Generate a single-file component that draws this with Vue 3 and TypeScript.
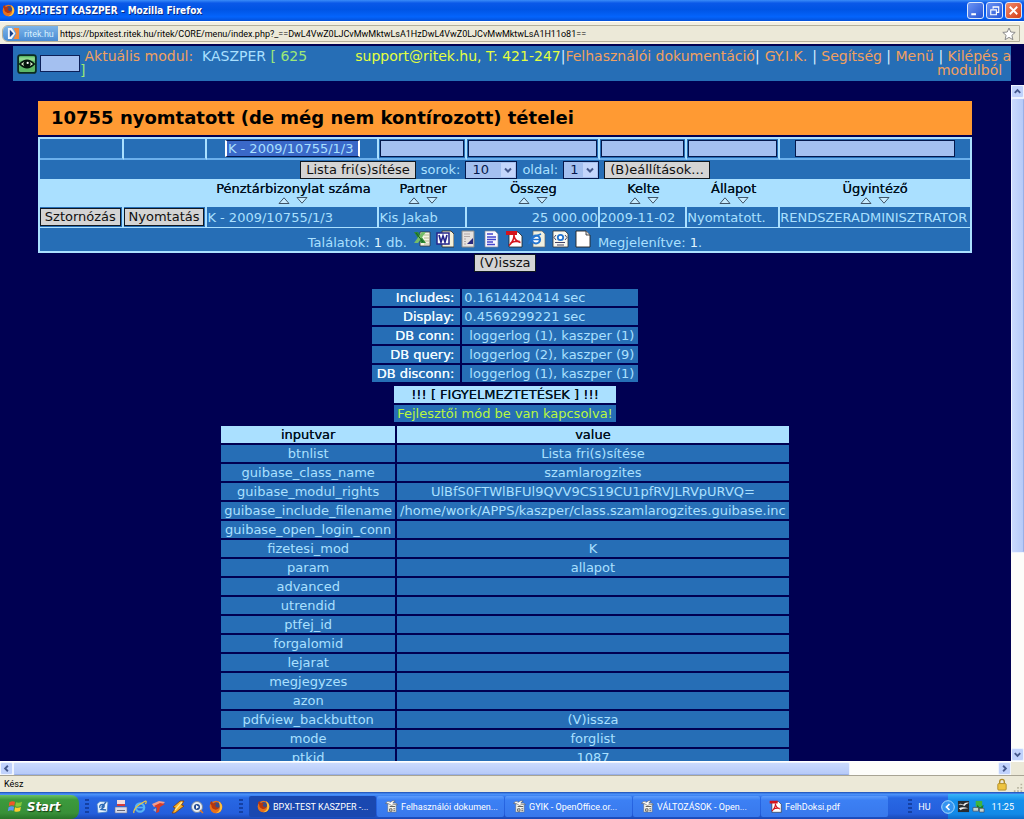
<script setup lang="ts">
import { ref, onMounted } from 'vue'

interface Column {
  label: string
  filterWidth: string
  value: string
  align: 'left' | 'right'
}

const columns: Column[] = [
  { label: 'Pénztárbizonylat száma', filterWidth: 'mid', value: 'K - 2009/10755/1/3', align: 'left' },
  { label: 'Partner', filterWidth: 'full', value: 'Kis Jakab', align: 'left' },
  { label: 'Összeg', filterWidth: 'full', value: '25 000.00', align: 'right' },
  { label: 'Kelte', filterWidth: 'full', value: '2009-11-02', align: 'left' },
  { label: 'Állapot', filterWidth: 'full', value: 'Nyomtatott.', align: 'left' },
  { label: 'Ügyintéző', filterWidth: 'wide', value: 'RENDSZERADMINISZTRATOR', align: 'left' },
]
const filters = ref<string[]>(['K - 2009/10755/1/3', '', '', '', '', ''])
const moduleCode = ref('')
const rows = ref('10')
const pageNo = ref('1')

const stats = [
  { label: 'Includes:', value: '0.1614420414 sec', list: false },
  { label: 'Display:', value: '0.4569299221 sec', list: false },
  { label: 'DB conn:', value: 'loggerlog (1), kaszper (1)', list: true },
  { label: 'DB query:', value: 'loggerlog (2), kaszper (9)', list: true },
  { label: 'DB disconn:', value: 'loggerlog (1), kaszper (1)', list: true },
]

const inputVars: [string, string][] = [
  ['btnlist', 'Lista fri(s)sítése'],
  ['guibase_class_name', 'szamlarogzites'],
  ['guibase_modul_rights', 'UlBfS0FTWlBFUl9QVV9CS19CU1pfRVJLRVpURVQ='],
  ['guibase_include_filename', '/home/work/APPS/kaszper/class.szamlarogzites.guibase.inc'],
  ['guibase_open_login_conn', ''],
  ['fizetesi_mod', 'K'],
  ['param', 'allapot'],
  ['advanced', ''],
  ['utrendid', ''],
  ['ptfej_id', ''],
  ['forgalomid', ''],
  ['lejarat', ''],
  ['megjegyzes', ''],
  ['azon', ''],
  ['pdfview_backbutton', '(V)issza'],
  ['mode', 'forglist'],
  ['ptkid', '1087'],
]

const exportsList = ['Excel', 'Word', 'Sablon', 'Szöveg', 'PDF', 'HTML', 'XML', 'Üres']
const tasks = [
  { icon: 'fox', text: 'BPXI-TEST KASZPER -...' },
  { icon: 'doc', text: 'Felhasználói dokumen...' },
  { icon: 'doc', text: 'GYIK - OpenOffice.or...' },
  { icon: 'doc', text: 'VÁLTOZÁSOK - Open...' },
  { icon: 'pdf', text: 'FelhDoksi.pdf' },
]
const quick = ['Asztal', 'Mentés', 'Internet Explorer', 'Levelezés', 'Winamp', 'Lejátszó', 'Firefox']

const root = ref<HTMLElement | null>(null)
onMounted(() => {
  root.value?.querySelector<HTMLInputElement>('.filter-mid')?.select()
})
</script>

<template>
  <div ref="root" class="screen">
    <svg class="defs" aria-hidden="true">
      <symbol id="fox" viewBox="0 0 14 14">
        <circle cx="7" cy="7" r="6.3" fill="#e8701a" />
        <circle cx="7.4" cy="5.6" r="3.4" fill="#3a4c88" />
        <path d="M1 3 L2.5 1 L4 3.2 L7.5 3.6 L6 5.6 L7.5 7.6 L10 7.2 Q9 10 6 9.6 Q2.5 9 2.4 5.5Z" fill="#b8360c" />
        <path d="M9.5 1.2 Q14 4 13 8.6 Q11.5 13.4 6.6 13.2 Q10.8 11.6 11 7.6 Q11 4 9.5 1.2Z" fill="#ffc23a" />
      </symbol>
      <symbol id="doc" viewBox="0 0 14 14">
        <path d="M3 4h9v9H3z" fill="#f6f6ee" stroke="#666" stroke-width=".5" />
        <path d="M.5 3.6Q3 0 6 2.400Q8 0 11 1.200Q9 2 8.400 3.400Q12 2.600 13.500 5Q9 4.200 7 5.800Q4 3.400 .5 3.600Z" fill="#fff" stroke="#555" stroke-width=".6" />
        <path d="M5 7h6M5 9.5h2.5v2.5H5zM9 9.5h2M9 11.5h2" stroke="#444" stroke-width=".9" fill="none" />
      </symbol>
      <symbol id="pdf" viewBox="0 0 18 18">
        <path d="M4 2h9l4 4v11H4z" fill="#fff" stroke="#222" stroke-width=".8" />
        <path d="M1 1h11v4H1z" fill="#d4141c" />
        <path d="M9 5Q9 11 4 15.5M9 6Q10 11 15.5 12.5M5.5 13Q9 10.8 14.5 11.4" stroke="#d4141c" stroke-width="1.6" fill="none" />
      </symbol>
    </svg>

    <header class="titlebar">
      <svg class="i13"><use href="#fox" /></svg>
      <h1 class="window-title">BPXI-TEST KASZPER - Mozilla Firefox</h1>
      <button class="win-btn" type="button" aria-label="Kis méret">
        <svg viewBox="0 0 16 16"><path d="M3.5 12h5" stroke="#fff" stroke-width="2.2" /></svg>
      </button>
      <button class="win-btn" type="button" aria-label="Előző méret">
        <svg viewBox="0 0 16 16"><path d="M6.5 6V4h6v6h-2M6 4.5h7M3.5 7.2h6.5v5.3H4V7.2M3.5 7.5h7" stroke="#fff" stroke-width="1.2" fill="none" /></svg>
      </button>
      <button class="win-btn close" type="button" aria-label="Bezárás">
        <svg viewBox="0 0 16 16"><path d="M4 4l8 8M12 4l-8 8" stroke="#fff" stroke-width="1.9" /></svg>
      </button>
    </header>

    <div class="urlbar">
      <div class="url-field">
        <button class="site" type="button">
          <svg viewBox="0 0 16 14" class="site-icon">
            <path d="M2 1h4l4 6-4 6H2z" fill="#f2f6fc" /><path d="M4 3l4 4-4 4z" fill="#173e88" />
            <path d="M8 1h6v12H8l3-6z" fill="#f08a3c" />
          </svg>
          ritek.hu
        </button>
        <input class="url" aria-label="Cím" value="https://bpxitest.ritek.hu/ritek/CORE/menu/index.php?_==DwL4VwZ0LJCvMwMktwLsA1HzDwL4VwZ0LJCvMwMktwLsA1H11o81==" />
        <svg class="star" viewBox="0 0 14 14"><path d="M7 1l1.8 4 4.4.4-3.3 2.9 1 4.4L7 10.400l-3.900 2.300 1-4.400L.8 5.400 5.200 5z" fill="#fff" stroke="#8a8a8a" /></svg>
      </div>
    </div>

    <nav class="module-frame">
      <div class="module-bar">
        <button class="eye" type="button" aria-label="Megtekintés">
          <svg viewBox="0 0 18 18">
            <rect x="1" y="1" width="16" height="16" rx="2" fill="#5cb868" stroke="#0c2c20" stroke-width="1.600" />
            <path d="M2 3h14v3H2z" fill="#8ed88c" />
            <path d="M2.500 9Q9 2.500 15.500 9Q9 15.500 2.500 9Z" fill="#d8f0c8" stroke="#04140c" stroke-width="1.500" />
            <circle cx="9" cy="9" r="3.200" fill="#04140c" /><circle cx="9.600" cy="8" r="1" fill="#fff" />
          </svg>
        </button>
        <input v-model="moduleCode" class="code" aria-label="Modul kód" />
        <p class="module-name">&nbsp;<span class="orange">Aktuális modul:</span>&nbsp; <span class="pale">KASZPER</span> [ 625<br />]</p>
        <p class="module-links">
          <span class="support">support@ritek.hu,</span> <span class="phone">T: 421-247</span>|<a href="#dok">Felhasználói dokumentáció</a>|<a href="#gyik" class="faq">GY.I.K.</a>| <a href="#help">Segítség</a> | <a href="#menu">Menü</a> | <a href="#exit">Kilépés a<br />modulból</a>&nbsp;&nbsp;
        </p>
      </div>
    </nav>

    <div class="viewport">
      <main class="page">
        <section class="listing">
          <h2 class="list-title">10755 nyomtatott (de még nem kontírozott) tételei</h2>
          <table class="grid">
            <colgroup>
              <col class="c-act" /><col class="c-act" /><col class="c-no" /><col class="c-partner" />
              <col class="c-sum" /><col class="c-date" /><col class="c-state" /><col />
            </colgroup>
            <tbody>
              <tr class="filter-row">
                <td></td><td></td>
                <td v-for="(c, i) in columns" :key="c.label">
                  <input v-model="filters[i]" :class="'filter filter-' + c.filterWidth" :aria-label="c.label" />
                </td>
              </tr>
              <tr class="control-row">
                <td colspan="8">
                  <div class="controls">
                    <button class="btn" type="button">Lista fri(s)sítése</button>
                    <label for="rows">sorok:</label>
                    <span class="pick pick-rows">
                      <select id="rows" v-model="rows"><option>10</option><option>20</option></select>
                      <svg viewBox="0 0 14 14"><path d="M4 5.500l3 3 3-3" /></svg>
                    </span>
                    <label for="pageno">oldal:</label>
                    <span class="pick pick-page">
                      <select id="pageno" v-model="pageNo"><option>1</option></select>
                      <svg viewBox="0 0 14 14"><path d="M4 5.500l3 3 3-3" /></svg>
                    </span>
                    <button class="btn" type="button">(B)eállítások...</button>
                  </div>
                </td>
              </tr>
              <tr class="head-row">
                <th></th><th></th>
                <th v-for="c in columns" :key="c.label" scope="col">
                  {{ c.label }}
                  <span class="sort">
                    <svg viewBox="0 0 12 7"><path d="M1 6.500L6 .8l5 5.700z" /></svg>
                    <svg viewBox="0 0 12 7"><path d="M1 .5L6 6.200l5-5.700z" /></svg>
                  </span>
                </th>
              </tr>
              <tr class="data-row">
                <td><button class="btn cell-btn" type="button">Sztornózás</button></td>
                <td><button class="btn cell-btn" type="button">Nyomtatás</button></td>
                <td v-for="c in columns" :key="c.label" :class="c.align">{{ c.value }}</td>
              </tr>
              <tr class="foot-row">
                <td colspan="8">
                  <div class="foot">
                    <span>Találatok: <b>1</b> db.</span>
                    <span class="exports">
                      <button v-for="(e, i) in exportsList" :key="e" type="button" :aria-label="e">
                        <svg v-if="i === 0" viewBox="0 0 18 18"><path d="M7 2h10v14H7z" fill="#f4f4e4" stroke="#333" stroke-width=".8" /><path d="M11 5h5M11 8h5M11 11h5M11 14h5" stroke="#b8b890" /><path d="M1 2h4l8 11H8z" fill="#2c8a34" /><path d="M9 2h4L5 13H1z" fill="#74bc68" /><path d="M3 3l7 9" stroke="#176020" /></svg>
                        <svg v-else-if="i === 1" viewBox="0 0 18 18"><path d="M6 1h9l3 3v13H6z" fill="#f4f0d8" stroke="#333" stroke-width=".9" /><path d="M1 3h12v11H1z" fill="#fff" stroke="#26268c" stroke-width="1.500" /><path d="M3 5l2 7 2-6 2 6 2-7" fill="none" stroke="#26268c" stroke-width="1.700" /></svg>
                        <svg v-else-if="i === 2" viewBox="0 0 18 18"><path d="M3 1h12v16H3z" fill="#e6e2e0" stroke="#888" /><path d="M5 4h6M5 6.500h6M5 9h2M5 11.500h2M5 14h2" stroke="#b0a8a8" /><path d="M14 8v6H8z" fill="#28287c" /></svg>
                        <svg v-else-if="i === 3" viewBox="0 0 18 18"><path d="M3 1h10l3 3v13H3z" fill="#f8f8ff" stroke="#889" stroke-width=".7" /><path d="M5 4h6M5 7h9M5 9.500h9M5 12h6M5 14.500h8" stroke="#4444cc" stroke-width="1.300" /></svg>
                        <svg v-else-if="i === 4" viewBox="0 0 18 18"><use href="#pdf" /></svg>
                        <svg v-else-if="i === 5" viewBox="0 0 18 18"><path d="M5 1h9l3 3v13H5z" fill="#f0f0e0" stroke="#666" stroke-width=".7" /><circle cx="8" cy="9.500" r="4" fill="#fff" stroke="#2474d0" stroke-width="2.200" /><path d="M4 9.500h8M1 14Q1 8 13 4" stroke="#2474d0" stroke-width="1.700" fill="none" /></svg>
                        <svg v-else-if="i === 6" viewBox="0 0 18 18"><path d="M2 1h12l3 3v13H2z" fill="#f8f8f0" stroke="#333" stroke-width=".8" /><path d="M5 5L3 7.500 5 10M14 5l2 2.500-2 2.500M4 12.500h10M6 15h7" stroke="#446" fill="none" /><circle cx="9.500" cy="7.500" r="2.700" fill="#fff" stroke="#2474d0" stroke-width="1.800" /></svg>
                        <svg v-else viewBox="0 0 18 18"><path d="M2 1h10l4 4v12H2z" fill="#fff" stroke="#222" stroke-width=".9" /><path d="M12 1v4h4" fill="#ddd" stroke="#222" stroke-width=".8" /></svg>
                      </button>
                    </span>
                    <span>Megjelenítve: <b>1</b>.</span>
                  </div>
                </td>
              </tr>
            </tbody>
          </table>
        </section>

        <button class="btn back" type="button">(V)issza</button>

        <table class="info stats">
          <tbody>
            <tr v-for="s in stats" :key="s.label">
              <th scope="row">{{ s.label }}</th>
              <td :class="{ indent: s.list }">{{ s.value }}</td>
            </tr>
          </tbody>
        </table>

        <table class="info warn">
          <thead><tr><th scope="col">!!! [ FIGYELMEZTETÉSEK ] !!!</th></tr></thead>
          <tbody><tr><td>Fejlesztői mód be van kapcsolva!</td></tr></tbody>
        </table>

        <table class="info vars">
          <thead><tr><th scope="col">inputvar</th><th scope="col">value</th></tr></thead>
          <tbody>
            <tr v-for="v in inputVars" :key="v[0]"><td>{{ v[0] }}</td><td>{{ v[1] }}</td></tr>
          </tbody>
        </table>
      </main>

      <div class="vbar">
        <button class="sb" type="button" aria-label="Fel"><svg viewBox="0 0 12 12"><path d="M3 7.500l3-3 3 3" /></svg></button>
        <div class="vtrack"><div class="vthumb"></div></div>
        <button class="sb" type="button" aria-label="Le"><svg viewBox="0 0 12 12"><path d="M3 4.500l3 3 3-3" /></svg></button>
      </div>
    </div>

    <div class="hbar">
      <button class="sb" type="button" aria-label="Balra"><svg viewBox="0 0 12 12"><path d="M7.500 3l-3 3 3 3" /></svg></button>
      <div class="htrack"><div class="hthumb"></div></div>
      <button class="sb" type="button" aria-label="Jobbra"><svg viewBox="0 0 12 12"><path d="M4.500 3l3 3-3 3" /></svg></button>
      <div class="corner"></div>
    </div>

    <div class="status">
      <span>Kész</span>
      <svg class="lock" viewBox="0 0 12 14"><path d="M3.500 6V4a2.500 2.500 0 0 1 5 0v2" fill="none" stroke="#b08c28" stroke-width="1.500" /><rect x="1.500" y="6" width="9" height="7" rx="1" fill="#eec440" stroke="#b08c28" /></svg>
      <svg class="sizer" viewBox="0 0 12 12"><path d="M9 2h2v2H9zM5 6h2v2H5zM9 6h2v2H9zM1 10h2v2H1zM5 10h2v2H5zM9 10h2v2H9z" fill="#b8b4a0" /></svg>
    </div>

    <footer class="taskbar">
      <button class="start" type="button">
        <svg viewBox="0 0 16 16">
          <path d="M1.500 3.500Q4.500 1.500 7.500 3L6.700 7.300Q4 6 .8 7.700z" fill="#f0562a" />
          <path d="M8.500 3.400Q11.500 4.600 15 3L14 7.400Q11 9 7.700 7.700z" fill="#86c83a" />
          <path d="M.6 8.700Q3.600 7 6.500 8.300L5.700 12.600Q3 11.300-.2 13z" fill="#5a96f4" />
          <path d="M7.500 8.700Q10.500 10 13.800 8.400L12.900 12.800Q10 14.200 6.700 13z" fill="#fccc30" />
        </svg>
        Start
      </button>
      <i class="grip"></i>
      <div class="quick">
        <button v-for="(q, i) in quick" :key="q" type="button" :aria-label="q">
          <svg v-if="i === 0" viewBox="0 0 14 14"><path d="M2 4l3-2.500L13 2l-1 10-9 1z" fill="#e8f2fc" stroke="#4a84c8" stroke-width=".8" /><path d="M5 8Q4 5 7 4.500T9 7L6 9.500 11 10M11 2L6.500 7.500" stroke="#2868b4" fill="none" stroke-width="1.300" /></svg>
          <svg v-else-if="i === 1" viewBox="0 0 14 14"><path d="M3 0h8v6H3z" fill="#f2dcdc" /><path d="M3 4h8v2H3z" fill="#d43c3c" /><path d="M1 7h12v6H1z" fill="#d8dcea" stroke="#6c7090" stroke-width=".6" /><path d="M3 10.500h8" stroke="#667" /></svg>
          <svg v-else-if="i === 2" viewBox="0 0 14 14"><circle cx="7" cy="7.500" r="4.200" fill="none" stroke="#58b4f4" stroke-width="2.200" /><path d="M3.500 7.500h7" stroke="#58b4f4" stroke-width="1.700" /><path d="M1 13Q-1 8 12.500 1Q14 1 12.500 4" stroke="#f4c83c" stroke-width="1.200" fill="none" /></svg>
          <svg v-else-if="i === 3" viewBox="0 0 14 14"><path d="M0 4l7-3 6 1-3 3-8 2z" fill="#f49c8c" /><path d="M2 6l6-3 5 1-5 3-1 5-3 1 1-5z" fill="#d83c28" /><path d="M1 10l3-2v4z" fill="#a0a8c8" /></svg>
          <svg v-else-if="i === 4" viewBox="0 0 14 14"><path d="M9 1L2 7l2.500 1L1 13l3 0 9-7-2.500-1L13 1z" fill="#f8b028" stroke="#7c3c10" stroke-width=".8" /><path d="M11 2L4 10" stroke="#ffe898" stroke-width="1.300" /></svg>
          <svg v-else-if="i === 5" viewBox="0 0 14 14"><circle cx="7" cy="7" r="5.500" fill="#e8eef4" stroke="#7888a0" /><circle cx="7" cy="7" r="3" fill="#204890" /><path d="M6 5l3 2-3 2z" fill="#fff" /><path d="M10 10l3 3" stroke="#e87820" stroke-width="1.500" /></svg>
          <svg v-else viewBox="0 0 14 14"><use href="#fox" /></svg>
        </button>
      </div>
      <i class="grip"></i>
      <div class="tasks">
        <button v-for="(t, i) in tasks" :key="t.text" class="task" :class="{ active: i === 0 }" type="button">
          <svg class="i13"><use :href="'#' + t.icon" /></svg>
          <span>{{ t.text }}</span>
        </button>
      </div>
      <i class="grip"></i>
      <span class="lang">HU</span>
      <div class="tray">
        <button type="button" class="expand" aria-label="Rejtett ikonok"><svg viewBox="0 0 14 14"><circle cx="7" cy="7" r="6.300" fill="#3494f0" stroke="#a8dcff" /><path d="M8.500 4L5.500 7l3 3" stroke="#fff" stroke-width="1.700" fill="none" /></svg></button>
        <svg class="i13" viewBox="0 0 14 14"><path d="M1 1h12v12H1z" fill="#282c30" /><path d="M1 5Q4 3 6.500 5Q9 2 13 3Q9 4.500 8 6.500Q5 4.800 1 5zM2 9Q6 6.500 12 9Q6 9 4 11z" fill="#f2f2f2" /></svg>
        <svg class="i13" viewBox="0 0 14 14"><path d="M4 1h7v6H4z" fill="#40b440" /><path d="M5.500 5l3 3 4-3-1 5H5z" fill="#1c841c" /><path d="M1 8h6v4H1zM8 9h5v4H8z" fill="#c4d4d0" stroke="#445" stroke-width=".7" /></svg>
        <time class="clock">11:25</time>
      </div>
    </footer>
  </div>
</template>

<style>
html, body { height: 100%; overflow: hidden; }
#app { height: 100%; }
</style>

<style scoped>
.screen {
  --navy: #000052;
  --blue: #266eb6;
  --pale: #aae0ff;
  --ui: Roboto, "DejaVu Sans Condensed", sans-serif;
  height: 100vh;
  display: flex;
  flex-direction: column;
  overflow: hidden;
  background: var(--navy);
  color: var(--pale);
  font: 13px/15px "DejaVu Sans", sans-serif;
}
.screen *, .screen *::before { box-sizing: border-box; }
button, input, select { font: inherit; margin: 0; padding: 0; border: 0; border-radius: 0; background: none; color: inherit; }
svg { display: block; }
p, h1, h2 { margin: 0; }
.defs { position: absolute; width: 0; height: 0; }
.i13 { width: 13px; height: 13px; flex: none; }

.titlebar {
  height: 21px;
  flex: none;
  display: flex;
  align-items: center;
  gap: 2px;
  padding: 0 2px;
  background: linear-gradient(#3a8cf8 0, #0a58e8 15%, #0054e4 45%, #0464fc 80%, #0450d8 100%);
}
.window-title { flex: 1; color: #fff; font: bold 10px/14px "DejaVu Sans Condensed", sans-serif; text-shadow: 1px 1px #0a2a80; }
.win-btn { width: 17px; height: 17px; border: 1px solid #dce8fc; border-radius: 3px; background: linear-gradient(135deg, #6c94f4, #2454d4); }
.win-btn.close { background: linear-gradient(135deg, #f08c6c, #d43c14); }

.urlbar { height: 23px; flex: none; padding: 3px 4px 2px 2px; background: #f2efe2; border-top: 1px solid #fff; }
.url-field { height: 17px; display: flex; align-items: center; border: 1px solid #b4b09c; background: #ece9d8; border-radius: 6px 0 0 6px; overflow: hidden; }
.site { height: 15px; width: 55px; flex: none; display: flex; align-items: center; gap: 3px; padding-left: 3px; color: #d8f0ff; font: 9px/12px var(--ui); background: linear-gradient(#7cb4e8, #4a8cd4); white-space: nowrap; }
.site-icon { width: 15px; height: 13px; }
.url { flex: 1; min-width: 0; height: 15px; padding-left: 2px; color: #000; font: 9px/12px var(--ui); }
.star { width: 14px; height: 14px; margin-right: 3px; }

.module-frame { height: 41px; flex: none; padding: 2px 13px 4px; }
.module-bar { height: 35px; display: flex; align-items: center; padding-left: 4px; background: var(--blue); color: #9ce878; font-size: 14px; line-height: 14px; }
.module-bar p { padding-bottom: 2px; }
.eye { width: 20px; height: 20px; flex: none; }
.code { width: 40px; height: 17px; flex: none; margin-left: 3px; background: #a4c0f0; border: 1px solid #0c2058; }
.module-name { white-space: nowrap; }
.orange, .module-links a { color: #f0a060; }
.pale { color: var(--pale); }
.module-links { flex: 1; text-align: right; white-space: nowrap; color: #d8f0ff; }
.module-links a { text-decoration: none; }
.module-links .faq { padding: 0 5px; }
.support, .phone { color: #e4ff40; }

.viewport { flex: 1; min-height: 0; display: flex; }
.page { flex: 1; min-width: 0; overflow: hidden; padding: 16px 39px 0 38px; display: flex; flex-direction: column; align-items: center; }
.page > * { flex: none; }
.listing { width: 100%; }
.list-title { height: 34px; margin-bottom: 2px; padding-left: 13px; background: #ff9a33; color: #000; font-size: 18px; font-weight: bold; line-height: 34px; }

.grid { width: 100%; table-layout: fixed; border-collapse: separate; border-spacing: 0; border: 2px solid var(--pale); white-space: nowrap; }
.grid td, .grid th { padding: 0; font-weight: normal; overflow: hidden; }
.grid td { background: var(--blue); }
.c-act { width: 9%; }
.c-no { width: 18.5%; }
.c-partner { width: 9.4%; }
.c-sum { width: 14.3%; }
.c-date { width: 9.4%; }
.c-state { width: 10%; }
.filter-row td, .data-row td { border-right: 2px solid var(--pale); }
.filter-row td:last-child, .data-row td:last-child { border-right: 0; }
.filter-row td { height: 21px; border-bottom: 2px solid #6cb0ec; text-align: center; }
.filter { display: block; width: calc(100% - 2px); height: 17px; margin: 0 auto; padding: 0 1px; background: #a4c0f0; border: 1px solid #04184c; color: #04184c; outline: 0; }
.filter-mid { width: 135px; background: #3a68c8; color: var(--pale); border-left: 2px solid #fff; border-right: 2px solid #fff; }
.filter-mid::selection { background: #3a68c8; color: var(--pale); }
.filter-wide { width: 84%; }
.control-row td { height: 19px; }
.controls { display: flex; justify-content: center; align-items: center; gap: 5px; }
.btn { height: 18px; padding: 0 5px; border: 1px solid #101820; background: #d4d4d4; color: #101010; line-height: 16px; white-space: nowrap; }
.pick { position: relative; height: 18px; }
.pick select { appearance: none; width: 100%; height: 18px; padding-left: 6px; background: #a4c0f0; border: 1px solid #04184c; color: #04184c; }
.pick svg { position: absolute; top: 2px; right: 2px; width: 14px; height: 14px; background: #c4d6fc; pointer-events: none; }
.pick path, .sb path { fill: none; stroke: #44588c; stroke-width: 2; }
.pick-rows { width: 52px; }
.pick-page { width: 36px; }
.head-row th { height: 28px; background: var(--pale); color: #001020; line-height: 15px; text-shadow: 0 0 #001020; }
.sort { display: flex; justify-content: center; gap: 6px; height: 9px; }
.sort svg { width: 12px; height: 7px; margin-top: 1px; }
.sort path { fill: #c8ecff; stroke: #405468; stroke-width: 1; }
.data-row td { height: 21px; border-bottom: 1px solid var(--pale); }
.data-row .right { text-align: right; }
.cell-btn { display: block; width: calc(100% - 1px); margin: 0 auto 0 0; padding: 0; }
.foot-row td { height: 23px; }
.foot { display: flex; justify-content: center; align-items: center; gap: 6px; height: 23px; }
.foot > span { padding-top: 6px; }
.foot b { color: #e0f4ff; font-weight: normal; }
.foot .exports { display: flex; gap: 5px; padding: 0 0 2px; }
.exports button, .exports svg { width: 18px; height: 18px; }

.back { margin-top: 1px; }
.info { border-spacing: 2px; white-space: nowrap; }
.info th, .info td { height: 17px; padding: 1px 3px; background: var(--blue); font-weight: normal; text-align: center; line-height: 15px; }
.info thead th { background: var(--pale); color: #001020; text-shadow: 0 0 #001020; }
.stats { margin-top: 15px; }
.info.stats th { color: #f0faff; text-align: right; padding: 1px 6px 1px 5px; text-shadow: 0 0 #f0faff; }
.info.stats td { text-align: left; padding: 1px 5px 1px 2px; }
.info.stats .indent { padding-left: 7px; padding-right: 4px; }
.warn td { color: #b8f840; }

.vbar { width: 13px; flex: none; display: flex; flex-direction: column; background: #fdfdfa; }
.sb { width: 13px; height: 13px; flex: none; border: 1px solid #eef4ff; border-radius: 2px; background: #c0d2fc; }
.vtrack { flex: 1; }
.vthumb { height: 70%; border: 1px solid #eef4ff; border-right-color: #98b0e8; border-radius: 2px; background: linear-gradient(90deg, #cadafe, #b6caf8); }
.hbar { height: 14px; flex: none; display: flex; background: #fdfdfa; border-top: 1px solid #fff; }
.htrack { flex: 1; }
.hthumb { width: 85%; height: 13px; border: 1px solid #eef4ff; border-bottom-color: #98b0e8; border-radius: 2px; background: linear-gradient(#cadafe, #b6caf8); }
.corner { width: 13px; background: #ece9d8; }
.status { height: 17px; flex: none; display: flex; align-items: center; padding: 0 1px 0 4px; background: #ece9d8; border-top: 1px solid #a8a494; color: #000; font: 9px/12px var(--ui); }
.lock { width: 12px; height: 13px; margin-left: auto; }
.sizer { width: 10px; height: 10px; margin-left: 5px; align-self: flex-end; }

.taskbar { height: 27px; flex: none; display: flex; align-items: center; padding-top: 2px; color: #fff; font: 9px/12px var(--ui); background: linear-gradient(#1c4cb0 0, #4c94fc 8%, #2868e4 22%, #245edc 80%, #1a48b4 100%); }
.start { width: 79px; height: 24px; display: flex; align-items: center; gap: 4px; padding-left: 8px; border-radius: 0 8px 8px 0; font: italic bold 13px/16px "DejaVu Sans Condensed", sans-serif; text-shadow: 1px 1px 1px #143c10; background: linear-gradient(#6cc068, #3c9a3c 20%, #389038 75%, #287428); }
.start svg { width: 15px; height: 15px; overflow: visible; }
.grip { width: 4px; height: 16px; margin: 0 6px; background: repeating-linear-gradient(#1440a4 0 2px, transparent 2px 4px); flex: none; }
.quick { display: flex; gap: 5px; margin-right: 10px; }
.quick button, .quick svg { width: 14px; height: 14px; }
.tasks { flex: 1; min-width: 0; display: flex; gap: 1px; }
.task { flex: 1; min-width: 0; max-width: 127px; height: 21px; display: flex; align-items: center; gap: 3px; padding-left: 8px; border-radius: 2px; background: linear-gradient(#5c9cfc, #3c80f4 20%, #3878ec); overflow: hidden; white-space: nowrap; }
.task.active { background: #1a48b0; }
.lang { margin-right: 17px; }
.tray { height: 25px; display: flex; align-items: center; gap: 2px; padding-right: 10px; background: linear-gradient(#38b4f8, #1490ec 25%, #128ae8 80%, #0c6cc8); }
.expand, .expand svg { width: 14px; height: 14px; }
.expand { margin-left: -7px; }
.clock { margin-left: 5px; }
</style>
